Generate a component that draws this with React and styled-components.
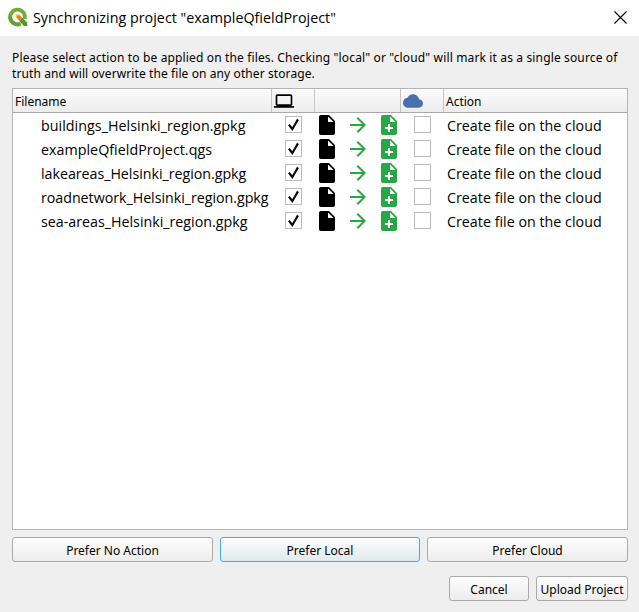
import React from "react";
import styled, { createGlobalStyle } from "styled-components";

const GlobalStyle = createGlobalStyle`
  * { box-sizing: border-box; }
  body { margin: 0; background: #efefef; }
`;

const uiFont = '"Noto Sans", sans-serif';
const systemFont = '"Open Sans", sans-serif';

const Dialog = styled.div`
  width: 639px;
  height: 612px;
  display: flex;
  flex-direction: column;
  background: #efefef;
  color: #000;
  font: 12px/16px ${uiFont};
  white-space: nowrap;
  overflow: hidden;
`;

const TitleBar = styled.header`
  height: 36px;
  flex: none;
  display: flex;
  align-items: center;
  padding: 0 12px 2px 8px;
  background: #fff;
`;

const Title = styled.h1`
  flex: 1;
  margin: 0 0 0 5px;
  padding-top: 2px;
  font: 400 14.33px/20px ${systemFont};
`;

const Content = styled.main`
  flex: 1;
  display: flex;
  flex-direction: column;
  padding: 14px 11px 11px 12px;
`;

const Intro = styled.p`
  margin: 0 0 6px;
`;

const IntroLine = styled.span`
  display: block;
  letter-spacing: ${(p) => p.$tracking}px;
`;

const Table = styled.section`
  height: 442px;
  border: 1px solid #b4b4b4;
  background: #fff;
`;

const columns = "259px 43px 86px 43px 1fr";

const HeaderRow = styled.div`
  display: grid;
  grid-template-columns: ${columns};
  height: 24px;
  border-bottom: 1px solid #a9a9a9;
  background: linear-gradient(#fcfcfc, #ececec);
`;

const HeaderCell = styled.div`
  display: flex;
  align-items: center;
  padding: ${(p) => (p.$icon ? "0" : "2px")} 0 0 2px;
  border-right: 1px solid #c6c6c6;
  &:last-child { border-right: 0; }
`;

const Row = styled.div`
  display: grid;
  grid-template-columns: ${columns};
  align-items: center;
  height: 24px;
  font: 14.25px/22px ${systemFont};
`;

const NameCell = styled.div`
  padding: 2px 0 0 28px;
  letter-spacing: ${(p) => p.$tracking}px;
`;

const ActionCell = styled.div`
  padding: 2px 0 0 3px;
  letter-spacing: 0.02px;
`;

const CheckCell = styled.div`
  display: flex;
  padding: 0 0 1px 13px;
`;

const CheckBox = styled.span`
  display: flex;
  width: 17px;
  height: 17px;
  border: 1px solid #bcbcbc;
  background: #fff;
`;

const StatusCell = styled.div`
  display: flex;
  gap: 7px;
`;

const Icon = styled.svg`
  display: block;
  flex: none;
`;

const PreferRow = styled.div`
  display: grid;
  grid-template-columns: 201px 200px 201px;
  gap: 7px;
  margin-top: 7px;
`;

const DialogButtons = styled.footer`
  display: flex;
  justify-content: flex-end;
  gap: 7px;
  margin-top: 14px;
`;

const Button = styled.button`
  width: ${(p) => p.$width || "auto"};
  height: 25px;
  padding: 3px 0 0;
  border: 1px solid ${(p) => (p.$active ? "#3daaf5" : "#aaa")};
  border-radius: 3px;
  background: ${(p) =>
    p.$active ? "linear-gradient(#fcfdfe, #e2e9ee)" : "linear-gradient(#fdfdfd, #ececec)"};
  color: #000;
  font: 12px/16px ${uiFont};
  white-space: nowrap;
`;

const CloseButton = styled.button`
  display: flex;
  padding: 0;
  border: 0;
  background: none;
`;

const Logo = () => (
  <Icon width="20" height="20" viewBox="0 0 20 20">
    <path d="M12.6 16.7A7.4 7.4 0 1 1 16.6 12" fill="none" stroke="#76ab36" strokeWidth="3.9" />
    <path d="M12.6 16.7A7.4 7.4 0 0 1 2.3 10" fill="none" stroke="#589632" strokeOpacity=".55" strokeWidth="3.9" />
    <path d="M11.6 10.4h2.6l5 5.1v3.6h-3.4l-4.8-5.3z" fill="#589632" />
    <path d="M7.8 7.4h3.6l2.9 3-3.1 3.4-3.1-3.2z" fill="#f3c14b" />
    <path d="M9 8.6h2.4l2.4 2.2-2.5 2.7-2.3-2.5z" fill="#ec7a2c" />
  </Icon>
);

const Laptop = () => (
  <Icon width="20" height="20" viewBox="0 0 24 24">
    <path d="M20 18c1.1 0 1.99-.9 1.99-2L22 6c0-1.1-.9-2-2-2H4c-1.1 0-2 .9-2 2v10c0 1.1.9 2 2 2H0v2h24v-2h-4zM4 6h16v10H4V6z" />
  </Icon>
);

const Cloud = () => (
  <Icon width="20" height="20" viewBox="0 0 24 24">
    <path
      fill="#4a6fae"
      d="M19.35 10.04C18.67 6.59 15.64 4 12 4 9.11 4 6.6 5.64 5.35 8.04 2.34 8.36 0 10.91 0 14c0 3.31 2.69 6 6 6h13c2.76 0 5-2.24 5-5 0-2.64-2.05-4.78-4.65-4.96z"
    />
  </Icon>
);

const FileIcon = () => (
  <Icon width="24" height="24" viewBox="0 0 24 24">
    <path d="M6 2c-1.1 0-1.99.9-1.99 2L4 20c0 1.1.89 2 1.99 2H18c1.1 0 2-.9 2-2V8l-6-6H6zm7 7V3.5L18.5 9H13z" />
  </Icon>
);

const ArrowIcon = () => (
  <Icon width="24" height="24" viewBox="0 0 24 24">
    <path fill="#28a745" d="M12 4l-1.41 1.41L16.17 11H4v2h12.17l-5.58 5.59L12 20l8-8z" />
  </Icon>
);

const FileAddIcon = () => (
  <Icon width="24" height="24" viewBox="0 0 24 24">
    <path
      fill="#28a745"
      d="M14 2H6c-1.1 0-1.99.9-1.99 2L4 20c0 1.1.89 2 1.99 2H18c1.1 0 2-.9 2-2V8l-6-6zm2 14h-3v3h-2v-3H8v-2h3v-3h2v3h3v2zm-3-7V3.5L18.5 9H13z"
    />
  </Icon>
);

const Tick = () => (
  <Icon width="15" height="15" viewBox="0 0 15 15">
    <path d="M2.9 7.6l3.4 4.6L12 2.4" fill="none" stroke="#000" strokeWidth="2.1" />
  </Icon>
);

const CloseIcon = () => (
  <Icon width="13" height="13" viewBox="0 0 13 13">
    <path d="M.5.5l12 12M12.5.5l-12 12" fill="none" stroke="#000" strokeWidth="1.1" />
  </Icon>
);

const files = [
  { name: "buildings_Helsinki_region.gpkg", tracking: 0.05 },
  { name: "exampleQfieldProject.qgs", tracking: 0.035 },
  { name: "lakeareas_Helsinki_region.gpkg", tracking: -0.03 },
  { name: "roadnetwork_Helsinki_region.gpkg", tracking: -0.03 },
  { name: "sea-areas_Helsinki_region.gpkg", tracking: 0 },
];

export default function App() {
  return (
    <Dialog>
      <GlobalStyle />
      <TitleBar>
        <Logo />
        <Title>Synchronizing project "exampleQfieldProject"</Title>
        <CloseButton aria-label="Close">
          <CloseIcon />
        </CloseButton>
      </TitleBar>
      <Content>
        <Intro>
          <IntroLine $tracking={0.143}>
            Please select action to be applied on the files. Checking "local" or "cloud" will mark it as a single source of
          </IntroLine>
          <IntroLine $tracking={0.095}>truth and will overwrite the file on any other storage.</IntroLine>
        </Intro>
        <Table>
          <HeaderRow>
            <HeaderCell>Filename</HeaderCell>
            <HeaderCell $icon><Laptop /></HeaderCell>
            <HeaderCell />
            <HeaderCell $icon><Cloud /></HeaderCell>
            <HeaderCell>Action</HeaderCell>
          </HeaderRow>
          {files.map((file) => (
            <Row key={file.name}>
              <NameCell $tracking={file.tracking}>{file.name}</NameCell>
              <CheckCell><CheckBox><Tick /></CheckBox></CheckCell>
              <StatusCell>
                <FileIcon />
                <ArrowIcon />
                <FileAddIcon />
              </StatusCell>
              <CheckCell><CheckBox /></CheckCell>
              <ActionCell>Create file on the cloud</ActionCell>
            </Row>
          ))}
        </Table>
        <PreferRow>
          <Button>Prefer No Action</Button>
          <Button $active>Prefer Local</Button>
          <Button>Prefer Cloud</Button>
        </PreferRow>
        <DialogButtons>
          <Button $width="80px">Cancel</Button>
          <Button $width="92px">Upload Project</Button>
        </DialogButtons>
      </Content>
    </Dialog>
  );
}
